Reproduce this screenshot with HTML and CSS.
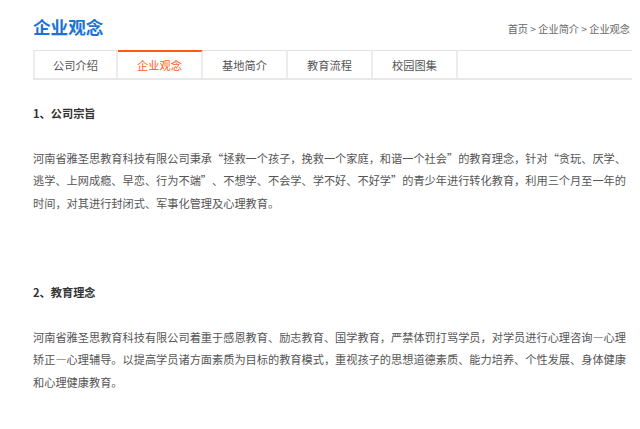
FILE: index.html
```html
<!DOCTYPE html>
<html lang="zh-CN">
<head>
<meta charset="utf-8">
<title>企业观念</title>
<link rel="stylesheet" href="styles.css">
</head>
<body>
<div class="page">
  <div class="head">
    <h1 class="title">企业观念</h1>
    <div class="crumb">首页 &gt; 企业简介 &gt; 企业观念</div>
  </div>
  <div class="tabs">
    <a class="tab">公司介绍</a>
    <a class="tab active">企业观念</a>
    <a class="tab">基地简介</a>
    <a class="tab">教育流程</a>
    <a class="tab">校园图集</a>
  </div>
  <div class="content">
    <h2 class="sec">1、公司宗旨</h2>
    <p class="para">河南省雅圣思教育科技有限公司秉承“拯救一个孩子，挽救一个家庭，和谐一个社会”的教育理念，针对“贪玩、厌学、逃学、上网成瘾、早恋、行为不端”、不想学、不会学、学不好、不好学”的青少年进行转化教育，利用三个月至一年的时间，对其进行封闭式、军事化管理及心理教育。</p>
    <h2 class="sec">2、教育理念</h2>
    <p class="para">河南省雅圣思教育科技有限公司着重于感恩教育、励志教育、国学教育，严禁体罚打骂学员，对学员进行心理咨询—心理矫正—心理辅导。以提高学员诸方面素质为目标的教育模式，重视孩子的思想道德素质、能力培养、个性发展、身体健康和心理健康教育。</p>
  </div>
</div>
</body>
</html>
```
FILE: styles.css
```css
html, body {
  margin: 0;
  padding: 0;
  background: #fff;
}
body {
  font-family: "Noto Sans CJK SC", "Microsoft YaHei", sans-serif;
  color: #555;
  text-spacing-trim: space-all;
}
.page {
  width: 599px;
  margin-left: 33px;
}
.head {
  display: flex;
  justify-content: space-between;
  align-items: center;
  padding-top: 16px;
}
.title {
  margin: 0;
  font-size: 17.6px;
  line-height: 22px;
  font-weight: bold;
  color: #1a74d4;
}
.crumb {
  font-size: 10.2px;
  line-height: 14px;
  color: #666;
  padding-top: 3px;
  padding-right: 2px;
}
.tabs {
  display: flex;
  margin-top: 12px;
  border-top: 1px solid #e2e2e2;
  border-bottom: 2px solid #e8e8e8;
  height: 27px;
}
.tab {
  box-sizing: border-box;
  width: 85px;
  display: flex;
  align-items: center;
  justify-content: center;
  font-size: 11.2px;
  color: #555;
  border-right: 2px solid #ececec;
  margin-top: -1px;
  border-top: 1px solid transparent;
  height: 28px;
}
.tab:first-child {
  border-left: 2px solid #ececec;
}
.tab.active {
  color: #ff5a14;
  border-top: 2px solid #ff5a14;
  padding-bottom: 1px;
}
.content {
  padding-top: 22px;
  font-size: 11.2px;
  line-height: 22.4px;
}
.sec {
  margin: 0 0 22.4px;
  font-size: 11.2px;
  line-height: 22.4px;
  font-weight: bold;
  color: #333;
}
.para {
  margin: 0 0 67.2px;
}
.para:last-child {
  margin-bottom: 0;
}
```
